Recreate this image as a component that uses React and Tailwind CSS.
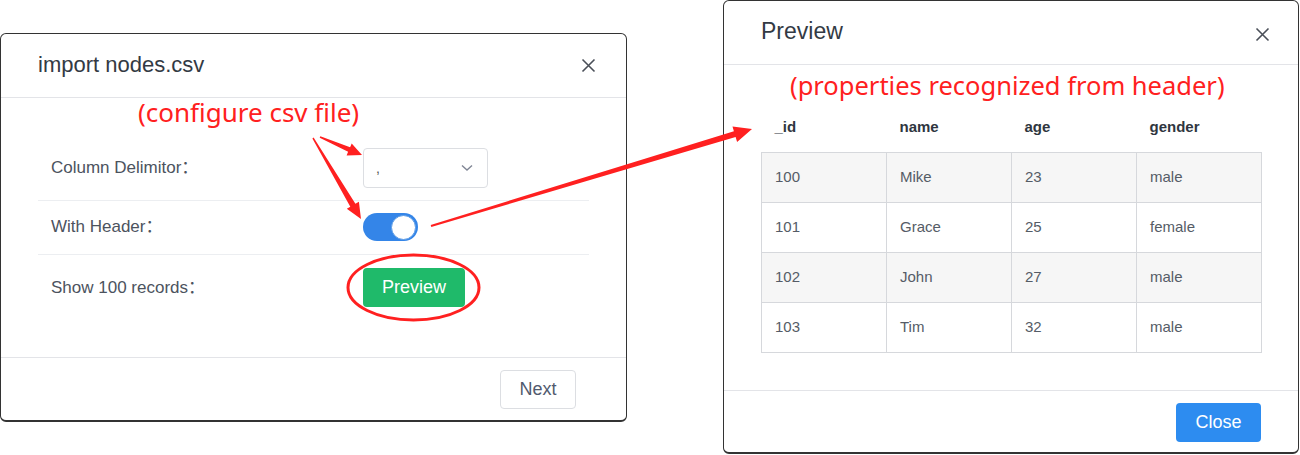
import React from "react";

const ui = { fontFamily: '"Liberation Sans", Arial, "Noto Sans CJK SC", sans-serif' };
const note = { fontFamily: '"Noto Sans", "Noto Sans CJK SC", sans-serif' };

const rows = [
  ["100", "Mike", "23", "male"],
  ["101", "Grace", "25", "female"],
  ["102", "John", "27", "male"],
  ["103", "Tim", "32", "male"],
];

// tapered arrow outline, tail -> tip
function arrowPoints(x1, y1, x2, y2, w1, w2, hl, hw) {
  const dx = x2 - x1;
  const dy = y2 - y1;
  const len = Math.sqrt(dx * dx + dy * dy);
  const ux = dx / len;
  const uy = dy / len;
  const nx = -uy;
  const ny = ux;
  const bx = x2 - ux * hl;
  const by = y2 - uy * hl;
  const pts = [
    [x1 + (nx * w1) / 2, y1 + (ny * w1) / 2],
    [bx + (nx * w2) / 2, by + (ny * w2) / 2],
    [bx + (nx * hw) / 2, by + (ny * hw) / 2],
    [x2, y2],
    [bx - (nx * hw) / 2, by - (ny * hw) / 2],
    [bx - (nx * w2) / 2, by - (ny * w2) / 2],
    [x1 - (nx * w1) / 2, y1 - (ny * w1) / 2],
  ];
  return pts.map((p) => p[0].toFixed(1) + "," + p[1].toFixed(1)).join(" ");
}

const CloseIcon = () => (
  <svg width="15" height="15" viewBox="0 0 15 15">
    <path d="M1.5 1.5 L13.5 13.5 M13.5 1.5 L1.5 13.5" stroke="#4a4f58" strokeWidth="1.6" fill="none" />
  </svg>
);

const App = () => {
  return (
    <div className="relative w-[1300px] h-[455px] bg-white overflow-hidden flex items-start" style={ui}>
      {/* import dialog */}
      <div className="mt-[33px] w-[627px] h-[389px] border border-[#333] border-b-2 rounded-[6px] bg-white flex flex-col">
        <div className="h-[64px] border-b border-[#e3e4e8] flex items-center justify-between pl-[37px] pr-[30px]">
          <span className="text-[22px] text-[#333a44] -mt-[2px]">import nodes.csv</span>
          <CloseIcon />
        </div>
        <div className="flex-1 pt-[39px] px-[37px]">
          <div className="flex items-center pt-[11px] pb-[12px] border-b border-[#eceef1]">
            <div className="w-[325px] pl-[13px] text-[17px] text-[#4c535e]">Column Delimitor：</div>
            <div className="w-[125px] h-[40px] border border-[#dcdee2] rounded-[4px] flex items-center justify-between pl-[12px] pr-[14px]">
              <span className="text-[14px] text-[#555]">,</span>
              <svg width="12" height="8" viewBox="0 0 12 8">
                <path d="M1 1.5 L6 6 L11 1.5" stroke="#808695" strokeWidth="1.4" fill="none" />
              </svg>
            </div>
          </div>
          <div className="flex items-center pt-[6px] pb-[7px] h-[54px] border-b border-[#eceef1]">
            <div className="w-[325px] pl-[13px] text-[17px] text-[#4c535e]">With Header：</div>
            <div className="w-[55px] h-[28px] rounded-full bg-[#3485e8] flex items-center justify-end pr-[2px]">
              <div className="w-[25px] h-[25px] rounded-full bg-white border border-[#5b9be6]"></div>
            </div>
          </div>
          <div className="flex items-center pt-[13px]">
            <div className="w-[325px] pl-[13px] text-[17px] text-[#4c535e]">Show 100 records：</div>
            <button className="w-[102px] h-[39px] rounded-[4px] bg-[#1fba6a] text-white text-[18px]">Preview</button>
          </div>
        </div>
        <div className="h-[63px] border-t border-[#e3e4e8] flex justify-end items-start pt-[12px] pr-[50px]">
          <button className="w-[76px] h-[39px] rounded-[4px] border border-[#dcdee2] text-[18px] text-[#515a6e] bg-white">
            Next
          </button>
        </div>
      </div>

      {/* preview dialog */}
      <div className="ml-[96px] w-[576px] h-[454px] border border-[#333] border-b-2 rounded-[6px] bg-white flex flex-col">
        <div className="h-[64px] border-b border-[#e3e4e8] flex items-center justify-between pl-[37px] pr-[28px]">
          <span className="text-[23px] text-[#333a44] -mt-[3px]">Preview</span>
          <span className="mt-[4px]">
            <CloseIcon />
          </span>
        </div>
        <div className="flex-1 pt-[37px] px-[37px]">
          <table className="w-[501px] table-fixed border-collapse text-[15px]">
            <thead>
              <tr>
                {["_id", "name", "age", "gender"].map((h) => (
                  <th key={h} className="h-[50px] px-[13px] text-left font-bold text-[#2f3640]">
                    {h}
                  </th>
                ))}
              </tr>
            </thead>
            <tbody>
              {rows.map((r, i) => (
                <tr key={r[0]} className={i % 2 === 0 ? "bg-[#f6f6f6]" : "bg-white"}>
                  {r.map((c, j) => (
                    <td key={j} className="h-[50px] px-[13px] border border-[#d6d8dc] text-[#555c66]">
                      {c}
                    </td>
                  ))}
                </tr>
              ))}
            </tbody>
          </table>
        </div>
        <div className="h-[62px] border-t border-[#e3e4e8] flex justify-end items-start pt-[12px] pr-[37px]">
          <button className="w-[85px] h-[39px] rounded-[4px] bg-[#2d8cf0] text-white text-[18px]">Close</button>
        </div>
      </div>

      {/* annotations */}
      <div className="absolute left-[138px] top-[96px] text-[26px] leading-[32px] text-[#ff2020] whitespace-nowrap" style={note}>
        (configure csv file)
      </div>
      <div className="absolute left-[790px] top-[69px] text-[25.5px] leading-[32px] text-[#ff2020] whitespace-nowrap" style={note}>
        (properties recognized from header)
      </div>
      <svg className="absolute inset-0 pointer-events-none" width="1300" height="455" viewBox="0 0 1300 455">
        <polygon points={arrowPoints(320, 137, 362, 155, 1.5, 5, 14, 13)} fill="#ff2020" />
        <polygon points={arrowPoints(313, 138, 361, 219, 1.5, 6, 16, 14)} fill="#ff2020" />
        <polygon points={arrowPoints(431, 226, 752, 129, 2, 6, 18, 16)} fill="#ff2020" />
        <ellipse cx="413.5" cy="287.5" rx="65.5" ry="32.5" stroke="#ff2020" strokeWidth="3" fill="none" />
      </svg>
    </div>
  );
};

export default App;
